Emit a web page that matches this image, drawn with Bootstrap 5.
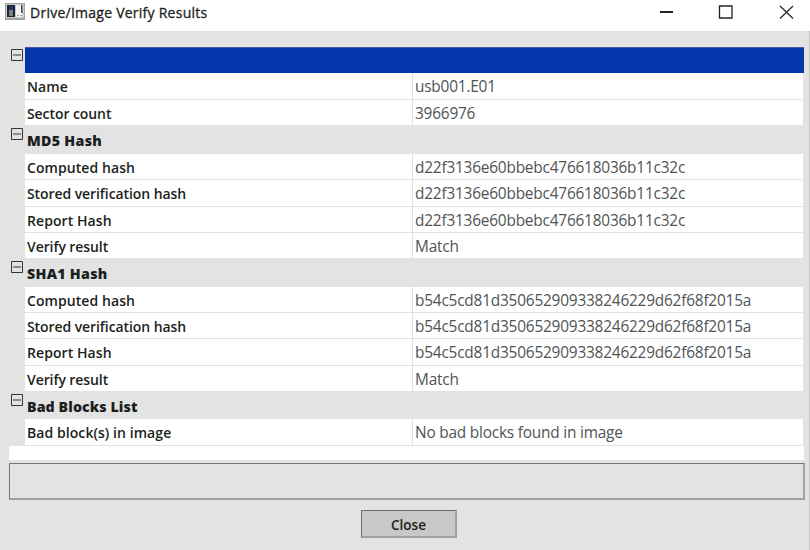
<!DOCTYPE html>
<html lang="en">
<head>
<meta charset="utf-8">
<meta name="viewport" content="width=device-width, initial-scale=1">
<title>Drive/Image Verify Results</title>
<link rel="stylesheet" href="https://cdn.jsdelivr.net/npm/bootstrap@5.3.0/dist/css/bootstrap.min.css">
<style>
body{font-family:"Open Sans","Noto Sans",sans-serif;color:#1c1f20;background:#e3e3e3}
.window{width:810px;height:550px;background:#e3e3e3}
.titlebar{height:31px;padding-left:5px;font-size:14px;font-weight:500;line-height:26px}
.caption{padding-left:5px;letter-spacing:.25px;-webkit-text-stroke:.3px #1c1f20}
.ctl{width:60px;height:25px}
.controls{margin-right:-6px}
.client{flex:1;border-right:1px solid #c4c4c4;padding:16px 4px 0 9px}
.prop-sheet{display:grid;grid-template-columns:16px 387px 1fr;grid-template-rows:26px 27px 26px 28px 26px 27px 26px 26px 28px 26px 26px 27px 26px 27px 27px;margin-right:2px}
.selected-head{background:#0336ab;grid-column:2/4;border-top:1px solid #455da0;margin-right:-1px}
.toggle-box{grid-column:1;padding:2px 0 0 2px;line-height:0}
.group-head{grid-column:2/4;font-weight:800;font-size:14.2px;line-height:29px;padding-left:2px;letter-spacing:.1px;white-space:nowrap}
.hash-head{letter-spacing:.3px}
.key,.val{background:#fff;border-bottom:1px solid #e2e2e2;white-space:nowrap}
.key{grid-column:2;font-size:14px;font-weight:600;line-height:28px;padding-left:2px;letter-spacing:-.08px}
.short-key{letter-spacing:.07px}
.val{grid-column:3;border-left:1px solid #e0e0e0;padding-left:2px;color:#505456;font-size:15.4px;line-height:28px;letter-spacing:-.2px}
.blank-strip{height:14px;margin-right:1px}
.info-panel{height:37px;margin-top:3px;border:1px solid #747879;border-bottom:2px solid #9da3a6;border-right:2px solid #9da3a6}
.close-btn{width:96px;height:28px;margin:10px 0 0 352px;background:#c8c8c8;border:1px solid #697072;border-right:2px solid #9aa2a4;border-bottom:2px solid #9aa2a4;font-size:13.5px;font-weight:600;line-height:28px;color:#1c1f20;letter-spacing:0}
</style>
<script src="https://cdn.jsdelivr.net/npm/bootstrap@5.3.0/dist/js/bootstrap.bundle.min.js"></script>
</head>
<body class="m-0 overflow-hidden">
<svg class="d-none"><defs><g id="minus-box"><path d="M.5 .5h11v11H.5zM2 6h8" fill="none" stroke="#303537"/></g></defs></svg>
<main class="window d-flex flex-column">
 <header class="titlebar bg-white d-flex align-items-start">
  <svg width="20" height="21" viewBox="0 0 20 21"><path d="M0 3h20v17H0z" fill="#9da2a4"/><path d="M1 4h18v14H1z" fill="#c9cccd"/><path d="M11 5h6v12h-6z" fill="#f2f3f3"/><path d="M2 5h8v12H2z" fill="#202426"/><path d="M4 7h4v9H4z" fill="#7c838d"/><path d="M4 6h4v4H4z" fill="#26357a"/><path d="M16 5h1.500v8H16z" fill="#444a4c"/><path d="M12 15.500h2m1 0h2" stroke="#a0a4a6"/></svg>
  <span class="caption">Drive/Image Verify Results</span>
  <div class="controls d-flex ms-auto">
   <svg class="ctl" viewBox="0 0 60 25"><path d="M24 12h13" stroke="#222" stroke-width="2"/></svg>
   <svg class="ctl" viewBox="0 0 60 25"><path d="M23.500 6h12.500v12h-12.500z" fill="none" stroke="#222" stroke-width="1.300"/></svg>
   <svg class="ctl" viewBox="0 0 60 25"><path d="M24 6l13 12.500M37 6L24 18.500" stroke="#222" stroke-width="1.200"/></svg>
  </div>
 </header>
 <section class="client">
  <div class="prop-sheet">
   <div class="toggle-box"><svg width="12" height="12"><use href="#minus-box"/></svg></div><div class="selected-head"></div>
   <div class="key short-key">Name</div><div class="val">usb001.E01</div>
   <div class="key">Sector count</div><div class="val">3966976</div>
   <div class="toggle-box"><svg width="12" height="12"><use href="#minus-box"/></svg></div><div class="group-head hash-head">MD5 Hash</div>
   <div class="key short-key">Computed hash</div><div class="val">d22f3136e60bbebc476618036b11c32c</div>
   <div class="key">Stored verification hash</div><div class="val">d22f3136e60bbebc476618036b11c32c</div>
   <div class="key short-key">Report Hash</div><div class="val">d22f3136e60bbebc476618036b11c32c</div>
   <div class="key">Verify result</div><div class="val">Match</div>
   <div class="toggle-box"><svg width="12" height="12"><use href="#minus-box"/></svg></div><div class="group-head hash-head">SHA1 Hash</div>
   <div class="key short-key">Computed hash</div><div class="val">b54c5cd81d350652909338246229d62f68f2015a</div>
   <div class="key">Stored verification hash</div><div class="val">b54c5cd81d350652909338246229d62f68f2015a</div>
   <div class="key short-key">Report Hash</div><div class="val">b54c5cd81d350652909338246229d62f68f2015a</div>
   <div class="key">Verify result</div><div class="val">Match</div>
   <div class="toggle-box"><svg width="12" height="12"><use href="#minus-box"/></svg></div><div class="group-head">Bad Blocks List</div>
   <div class="key short-key">Bad block(s) in image</div><div class="val">No bad blocks found in image</div>
  </div>
  <div class="blank-strip bg-white"></div>
  <div class="info-panel"></div>
  <button type="button" class="close-btn btn rounded-0 p-0 d-block">Close</button>
 </section>
</main>
</body>
</html>
